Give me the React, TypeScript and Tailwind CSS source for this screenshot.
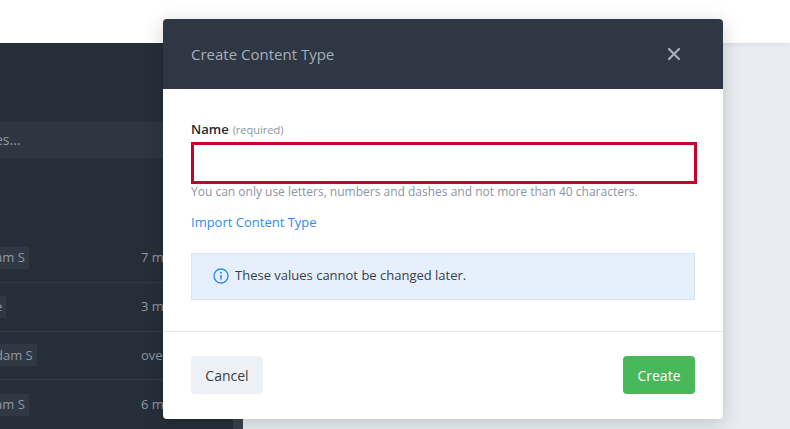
import React from "react";

const rows = [
  { who: "am S", when: "7 m" },
  { who: "e", when: "3 mi" },
  { who: "dam S", when: "over" },
  { who: "am S", when: "6 m" },
];

export default function App() {
  return (
    <div className="relative w-[790px] h-[429px] overflow-hidden bg-[#e9edf1]" style={{ fontFamily: '"Open Sans", sans-serif' }}>
      <div className="h-[43px] bg-white shadow-[0_2px_4px_rgba(0,0,0,0.06)]" />
      <div className="flex h-[386px]">
        <div className="w-[233px] bg-[#262e38] flex flex-col">
          <div className="h-[83px]" />
          <div className="h-[37px] bg-[#2e3741] flex items-center text-[14px] text-[#8e98a3] -ml-[5px]">es...</div>
          <div className="h-[80px]" />
          {rows.map((r, i) => (
            <div key={i} className={`h-[51px] flex items-center justify-between pr-[62px] ${i < 3 ? "border-b border-[#323b46]" : ""}`}>
              <span className="bg-[#2f3843] text-[#8e98a3] text-[13px] pr-[4px] -ml-[5px] h-[22px] flex items-center">{r.who}</span>
              <span className="text-[#8e98a3] text-[13px] w-[30px]">{r.when}</span>
            </div>
          ))}
        </div>
        <div className="w-[10px] bg-[#3a424c]" />
      </div>

      <div className="absolute left-[163px] top-[19px] w-[560px] h-[400px] bg-white rounded-[4px] shadow-[0_4px_20px_rgba(0,0,0,0.18)] overflow-hidden flex flex-col">
        <div className="h-[70px] bg-[#2e3743] flex items-center justify-between pl-[28px] pr-[42px]">
          <span className="text-[15px] text-[#a5afba]">Create Content Type</span>
          <svg width="14" height="14" viewBox="0 0 14 14"><path d="M2 2L12 12M12 2L2 12" stroke="#a5afba" strokeWidth="2.2" strokeLinecap="round" /></svg>
        </div>
        <div className="px-[28px] pt-[31px] h-[243px] border-b border-[#e5e8eb]">
          <div className="flex items-baseline gap-[4px] h-[20px]">
            <span className="text-[13px] font-semibold text-[#1f2933]">Name</span>
            <span className="text-[11px] text-[#8a96a3]">(required)</span>
          </div>
          <div className="mt-[2px] h-[42px] w-[506px] border-[3px] border-[#c8002b]" />
          <div className="-mt-[1px] text-[12px] text-[#8a96a3]">You can only use letters, numbers and dashes and not more than 40 characters.</div>
          <div className="mt-[12px] text-[13px] text-[#2f8cf0]">Import Content Type</div>
          <div className="mt-[20px] h-[47px] w-[504px] bg-[#e6effc] border border-[#dbe3ec] flex items-center pl-[21px] gap-[6px]">
            <svg width="16" height="16" viewBox="0 0 16 16"><circle cx="8" cy="8" r="7" fill="none" stroke="#2f8cf0" strokeWidth="1.4" /><circle cx="8" cy="4.8" r="1" fill="#2f8cf0" /><path d="M8 7v4.5" stroke="#2f8cf0" strokeWidth="1.6" /></svg>
            <span className="text-[13px] text-[#36404b]">These values cannot be changed later.</span>
          </div>
        </div>
        <div className="flex justify-between px-[28px] pt-[24px]">
          <button className="h-[38px] w-[72px] rounded-[4px] bg-[#edf1f5] text-[14px] text-[#36404b]">Cancel</button>
          <button className="h-[38px] w-[72px] rounded-[4px] bg-[#48b85a] text-[14px] text-white">Create</button>
        </div>
      </div>
    </div>
  );
}
